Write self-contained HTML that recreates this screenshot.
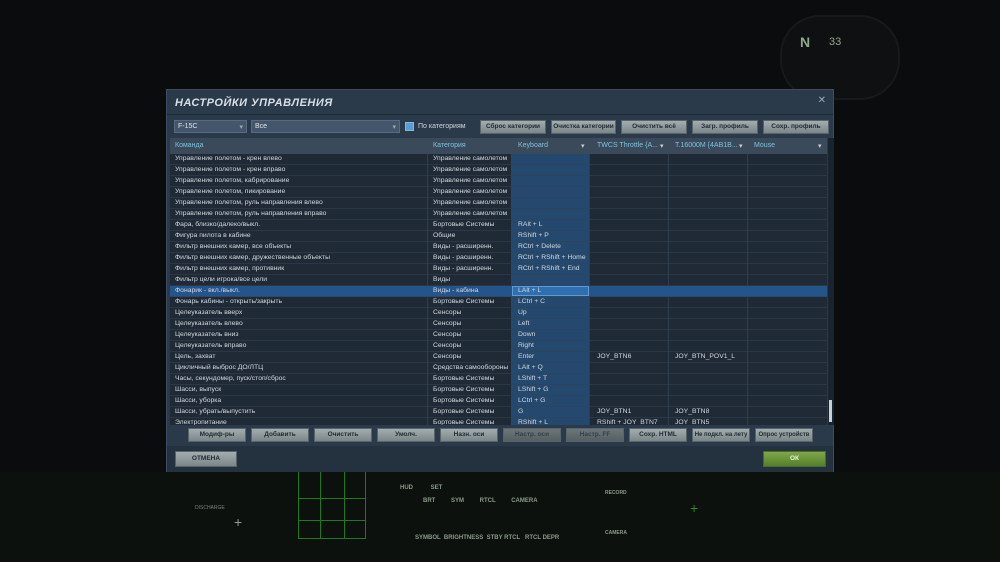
<!DOCTYPE html>
<html><head><meta charset="utf-8"><style>
*{margin:0;padding:0;box-sizing:border-box}
body{width:1000px;height:562px;overflow:hidden;background:#0b0c0d;font-family:"Liberation Sans","DejaVu Sans",sans-serif;position:relative}
.a{position:absolute}
.dlg{left:166px;top:89px;width:668px;height:383px;background:#2b3a4b;border:1px solid #3e4e60}
.title{left:8px;top:7px;color:#d8dee6;font-size:11px;font-weight:bold;font-style:italic;letter-spacing:0.5px}
.sel{height:13px;top:30px;background:#45566c;border:1px solid #576a80;color:#dfe5ea;font-size:7px;padding:2px 3px}
.btn{height:14px;background:linear-gradient(#a3adaf,#7b8688);border:1px solid #59646a;color:#1f2a30;font-size:6.5px;font-weight:bold;text-align:center;line-height:12px;white-space:nowrap;overflow:hidden}
.btn.dis{background:linear-gradient(#6c7679,#566063);color:#34404a}
.grid{left:3px;top:48px;width:657px;height:287px;background:#1f2a36;overflow:hidden}
.hdr{left:0;top:0;width:657px;height:16px;background:#3b4a5b}
.hdr div{position:absolute;top:4px;color:#7fc0e0;font-size:7px}
.row{position:absolute;left:0;width:657px;height:11px;border-bottom:1px solid rgba(50,66,82,0.6);font-size:6.8px;color:#d2d8de;line-height:10px}
.row span{position:absolute;white-space:nowrap}
.kb{position:absolute;left:341px;top:0;width:78px;height:287px;background:#24486e}
.vl{position:absolute;top:0;width:1px;height:287px;background:#2f3d4c}
</style></head><body>
<!-- background cockpit -->
<div class="a" style="left:780px;top:15px;width:120px;height:85px;border-radius:40px;background:#0f1011;border:2px solid #171a1b"></div>
<div class="a" style="left:800px;top:34px;color:#8fa88a;font-size:14px;font-weight:bold">N</div>
<div class="a" style="left:829px;top:36px;color:#8fa88a;font-size:11px">33</div>
<div class="a" style="left:0;top:472px;width:1000px;height:90px;background:#0d110d"></div>
<div class="a" style="left:298px;top:472px;width:68px;height:67px;border:1px solid #1f7a1f;border-top:none"></div>
<div class="a" style="left:298px;top:498px;width:68px;height:1px;background:#1f7a1f"></div>
<div class="a" style="left:298px;top:520px;width:68px;height:1px;background:#1f7a1f"></div>
<div class="a" style="left:320px;top:472px;width:1px;height:67px;background:#1f7a1f"></div>
<div class="a" style="left:344px;top:472px;width:1px;height:67px;background:#1f7a1f"></div>
<div class="a" style="left:400px;top:485px;color:#8a9a8a;font-size:6px;font-weight:bold;word-spacing:16px">HUD SET</div>
<div class="a" style="left:423px;top:498px;color:#8a9a8a;font-size:6px;font-weight:bold;word-spacing:14px">BRT SYM RTCL CAMERA</div>
<div class="a" style="left:415px;top:535px;color:#8a9a8a;font-size:6px;font-weight:bold">SYMBOL &nbsp;BRIGHTNESS &nbsp;STBY RTCL &nbsp;&nbsp;RTCL DEPR</div>
<div class="a" style="left:195px;top:505px;color:#7a857a;font-size:5px">DISCHARGE</div>
<div class="a" style="left:605px;top:490px;color:#8a9a8a;font-size:5px;font-weight:bold">RECORD</div>
<div class="a" style="left:605px;top:530px;color:#8a9a8a;font-size:5px;font-weight:bold">CAMERA</div>
<div class="a" style="left:690px;top:500px;color:#2a8a2a;font-size:14px">+</div>
<div class="a" style="left:234px;top:514px;color:#9a9a9a;font-size:14px">+</div>

<div class="a dlg">
 <div class="a title">НАСТРОЙКИ УПРАВЛЕНИЯ</div>
 <div class="a" style="right:7px;top:5px;color:#9aa8b8;font-size:10px">✕</div>
 <div class="a" style="left:0;top:24px;width:666px;height:1px;background:#1e2a36"></div>
 <div class="a sel" style="left:7px;width:73px">F-15C<span style="float:right;color:#9aa">▾</span></div>
 <div class="a sel" style="left:84px;width:149px">Все<span style="float:right;color:#9aa">▾</span></div>
 <div class="a" style="left:238px;top:32px;width:9px;height:9px;background:#5b9ad8;border:1px solid #8bb"></div>
 <div class="a" style="left:251px;top:33px;color:#cfd6dc;font-size:7px">По категориям</div>
 <div class="a btn" style="left:313px;top:30px;width:66px">Сброс категории</div>
 <div class="a btn" style="left:384px;top:30px;width:65px">Очистка категории</div>
 <div class="a btn" style="left:454px;top:30px;width:66px">Очистить всё</div>
 <div class="a btn" style="left:525px;top:30px;width:66px">Загр. профиль</div>
 <div class="a btn" style="left:596px;top:30px;width:66px">Сохр. профиль</div>
 <div class="a grid">
  <div class="kb"></div>
  <div class="vl" style="left:257px"></div><div class="vl" style="left:419px"></div><div class="vl" style="left:498px"></div><div class="vl" style="left:577px"></div>
  <div class="a hdr">
   <div style="left:5px">Команда</div><div style="left:263px">Категория</div><div style="left:348px">Keyboard</div><div style="left:411px;color:#ccc">▾</div>
   <div style="left:427px">TWCS Throttle {A...</div><div style="left:490px;color:#ccc">▾</div>
   <div style="left:505px">T.16000M {4AB1B...</div><div style="left:569px;color:#ccc">▾</div>
   <div style="left:584px">Mouse</div><div style="left:648px;color:#ccc">▾</div>
  </div>
  <div id="rows"></div>
 </div>
 <div class="a" style="left:661px;top:48px;width:6px;height:287px;background:#1a2430"></div>
 <div class="a" style="left:662px;top:310px;width:3px;height:22px;background:#c8d0d8"></div>
 <div class="a btn" style="left:21px;top:338px;width:58px">Модиф-ры</div>
 <div class="a btn" style="left:84px;top:338px;width:58px">Добавить</div>
 <div class="a btn" style="left:147px;top:338px;width:58px">Очистить</div>
 <div class="a btn" style="left:210px;top:338px;width:58px">Умолч.</div>
 <div class="a btn" style="left:273px;top:338px;width:58px">Назн. оси</div>
 <div class="a btn dis" style="left:336px;top:338px;width:58px">Настр. оси</div>
 <div class="a btn dis" style="left:399px;top:338px;width:58px">Настр. FF</div>
 <div class="a btn" style="left:462px;top:338px;width:58px">Сохр. HTML</div>
 <div class="a btn" style="left:525px;top:338px;width:58px;font-size:6px">Не подкл. на лету</div>
 <div class="a btn" style="left:588px;top:338px;width:58px;font-size:6px">Опрос устройств</div>
 <div class="a" style="left:0;top:356px;width:666px;height:26px;background:#24323f"></div>
 <div class="a btn" style="left:8px;top:361px;width:62px;height:16px;line-height:14px">ОТМЕНА</div>
 <div class="a btn" style="left:596px;top:361px;width:63px;height:16px;line-height:14px;background:linear-gradient(#7fa64a,#557f2c);color:#e8f0e0;border-color:#4a6a2a">ОК</div>
</div>
<script>
var R=[["Управление полетом - крен влево","Управление самолетом"],["Управление полетом - крен вправо","Управление самолетом"],["Управление полетом, кабрирование","Управление самолетом"],["Управление полетом, пикирование","Управление самолетом"],["Управление полетом, руль направления влево","Управление самолетом"],["Управление полетом, руль направления вправо","Управление самолетом"],["Фара, близко/далеко/выкл.","Бортовые Системы","RAlt + L"],["Фигура пилота в кабине","Общие","RShift + P"],["Фильтр внешних камер, все объекты","Виды - расширенн.","RCtrl + Delete"],["Фильтр внешних камер, дружественные объекты","Виды - расширенн.","RCtrl + RShift + Home"],["Фильтр внешних камер, противник","Виды - расширенн.","RCtrl + RShift + End"],["Фильтр цели игрока/все цели","Виды"],["Фонарик - вкл./выкл.","Виды - кабина","LAlt + L"],["Фонарь кабины - открыть/закрыть","Бортовые Системы","LCtrl + C"],["Целеуказатель  вверх","Сенсоры","Up"],["Целеуказатель  влево","Сенсоры","Left"],["Целеуказатель  вниз","Сенсоры","Down"],["Целеуказатель  вправо","Сенсоры","Right"],["Цель, захват","Сенсоры","Enter","JOY_BTN6","JOY_BTN_POV1_L"],["Цикличный выброс ДО/ЛТЦ","Средства самообороны","LAlt + Q"],["Часы, секундомер, пуск/стоп/сброс","Бортовые Системы","LShift + T"],["Шасси, выпуск","Бортовые Системы","LShift + G"],["Шасси, уборка","Бортовые Системы","LCtrl + G"],["Шасси, убрать/выпустить","Бортовые Системы","G","JOY_BTN1","JOY_BTN8"],["Электропитание","Бортовые Системы","RShift + L","RShift + JOY_BTN7","JOY_BTN5"]];
var h="";R.forEach(function(r,i){var t=16+i*11,s=i==12;
h+='<div class="row" style="top:'+t+'px;'+(s?'background:#24548a;':'')+'">'+
'<span style="left:5px">'+r[0]+'</span><span style="left:263px">'+r[1]+'</span>'+
(s?'<span style="left:342px;top:0;width:77px;height:10px;background:#2f6fb0;border:1px solid #5f9ad0"></span>':'')+
'<span style="left:348px">'+(r[2]||"")+'</span><span style="left:427px">'+(r[3]||"")+'</span><span style="left:505px">'+(r[4]||"")+'</span></div>';});
document.getElementById("rows").innerHTML=h;
</script>
</body></html>
